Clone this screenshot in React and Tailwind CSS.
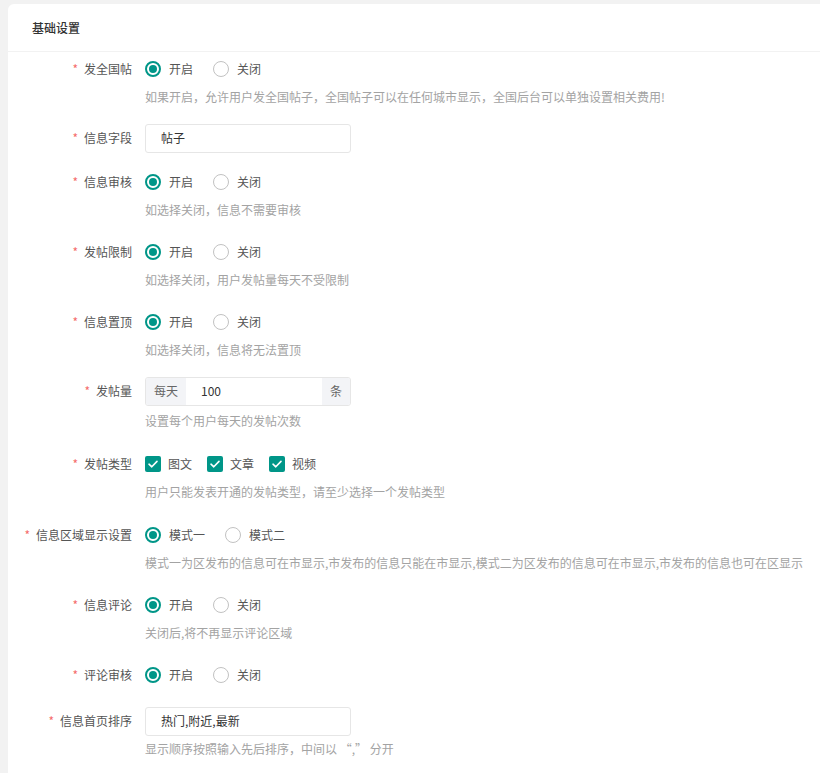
import React from "react";

const FONT = { fontFamily: '"Noto Sans CJK SC", "Noto Sans", sans-serif' };

function Radio({ checked, label }) {
  return (
    <div className="flex items-center mr-[20px]">
      {checked ? (
        <span className="w-[16px] h-[16px] rounded-full border-[2px] border-[#009688] flex items-center justify-center">
          <span className="w-[8px] h-[8px] rounded-full bg-[#009688]" />
        </span>
      ) : (
        <span className="w-[16px] h-[16px] rounded-full border border-[#c2c2c2]" />
      )}
      <span className="ml-[8px] text-[12px] text-[#555]">{label}</span>
    </div>
  );
}

function Check({ label }) {
  return (
    <div className="flex items-center mr-[15px]">
      <span className="w-[16px] h-[16px] rounded-[2px] bg-[#009688] flex items-center justify-center">
        <svg width="12" height="12" viewBox="0 0 12 12" fill="none">
          <path d="M2 6.2 L4.8 8.8 L10 3.4" stroke="#fff" strokeWidth="1.6" strokeLinecap="round" strokeLinejoin="round" />
        </svg>
      </span>
      <span className="ml-[7px] text-[12px] text-[#555]">{label}</span>
    </div>
  );
}

function Item({ label, help, children, helpMt = "mt-[3px]", pb = "pb-[14px]" }) {
  return (
    <div className={pb}>
      <div className="flex h-[30px]">
        <div className="w-[137px] pr-[13px] h-[30px] flex items-center justify-end text-[12px] text-[#555]">
          <span className="text-[#f56c6c] mr-[6px]">*</span>
          <span>{label}</span>
        </div>
        <div className="h-[30px] flex items-center">{children}</div>
      </div>
      {help && (
        <div className={`pl-[137px] ${helpMt} mb-[3px] h-[20px] flex items-center text-[12px] text-[#a3a3a3] whitespace-nowrap`}>
          {help}
        </div>
      )}
    </div>
  );
}

function OnOff() {
  return (
    <>
      <Radio checked label="开启" />
      <Radio label="关闭" />
    </>
  );
}

function TextInput({ value }) {
  return (
    <div className="w-[206px] h-[29px] border border-[#e6e6e6] rounded-[3px] flex items-center pl-[15px] text-[12px] text-[#333] bg-white">
      {value}
    </div>
  );
}

export default function App() {
  return (
    <div style={FONT} className="min-h-[773px] bg-[#f2f2f2] pl-[8px] pt-[4px] overflow-hidden">
      <div className="bg-white rounded-l-[6px] min-h-[800px]">
        <div className="h-[48px] border-b border-[#f2f2f2] flex items-center pl-[24px] text-[12px] font-medium text-[#333]">
          基础设置
        </div>
        <div className="pt-[2px]">
          <Item label="发全国帖" help="如果开启，允许用户发全国帖子，全国帖子可以在任何城市显示，全国后台可以单独设置相关费用!" pb="pb-[13px]">
            <OnOff />
          </Item>
          <Item label="信息字段">
            <TextInput value="帖子" />
          </Item>
          <Item label="信息审核" help="如选择关闭，信息不需要审核">
            <OnOff />
          </Item>
          <Item label="发帖限制" help="如选择关闭，用户发帖量每天不受限制">
            <OnOff />
          </Item>
          <Item label="信息置顶" help="如选择关闭，信息将无法置顶" pb="pb-[13px]">
            <OnOff />
          </Item>
          <Item label="发帖量" help="设置每个用户每天的发帖次数" helpMt="mt-[5px]" pb="pb-[15px]">
            <div className="w-[206px] h-[29px] border border-[#e6e6e6] rounded-[3px] flex text-[12px] overflow-hidden">
              <div className="w-[40px] bg-[#f3f4f7] text-[#666] flex items-center justify-center">每天</div>
              <div className="flex-1 bg-white text-[#333] flex items-center pl-[15px]">100</div>
              <div className="w-[28px] bg-[#f3f4f7] text-[#666] flex items-center justify-center">条</div>
            </div>
          </Item>
          <Item label="发帖类型" help="用户只能发表开通的发帖类型，请至少选择一个发帖类型" pb="pb-[15px]">
            <Check label="图文" />
            <Check label="文章" />
            <Check label="视频" />
          </Item>
          <Item label="信息区域显示设置" help="模式一为区发布的信息可在市显示,市发布的信息只能在市显示,模式二为区发布的信息可在市显示,市发布的信息也可在区显示">
            <Radio checked label="模式一" />
            <Radio label="模式二" />
          </Item>
          <Item label="信息评论" help="关闭后,将不再显示评论区域">
            <OnOff />
          </Item>
          <Item label="评论审核" pb="pb-[16px]">
            <OnOff />
          </Item>
          <Item label="信息首页排序" help="显示顺序按照输入先后排序，中间以 “,” 分开">
            <TextInput value="热门,附近,最新" />
          </Item>
        </div>
      </div>
    </div>
  );
}
